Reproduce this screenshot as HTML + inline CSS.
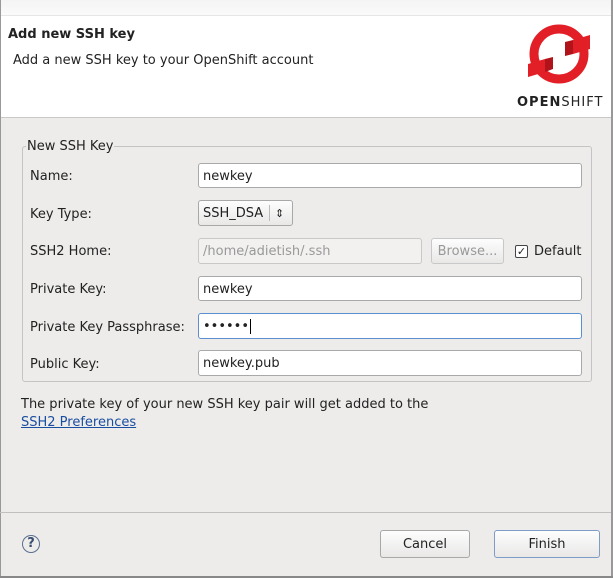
<!DOCTYPE html>
<html><head><style>
body{margin:0;width:613px;height:578px;background:#edeceb;font-family:"DejaVu Sans","Liberation Sans",sans-serif;font-size:13px;color:#222;position:relative;overflow:hidden}
.a{position:absolute}
.in{position:absolute;background:#fff;border:1px solid #a9a9a9;border-radius:3px;box-sizing:border-box;padding:1px 4px 0;line-height:23px}
.btn{position:absolute;box-sizing:border-box;border:1px solid #a8a8a8;border-radius:3px;background:linear-gradient(#fdfdfd,#e9e8e7);text-align:center}
.lbl{position:absolute;left:30px}
</style></head><body>
<div class="a" style="left:0;top:0;width:611px;height:117px;background:#fff;border-bottom:1px solid #c8c8c8"></div>
<div class="a" style="left:0;top:0;width:613px;height:15px;background:linear-gradient(#f4f4f4,#fafafa);border-bottom:1px solid #e6e6e6"></div>
<div class="a" style="left:0;top:0;width:1px;height:578px;background:#999"></div>
<div class="a" style="left:611px;top:0;width:2px;height:578px;background:#999"></div>
<div class="a" style="left:0;top:576px;width:613px;height:2px;background:#888"></div>
<div class="a" style="left:8px;top:27px;font-weight:bold">Add new SSH key</div>
<div class="a" style="left:13px;top:53px">Add a new SSH key to your OpenShift account</div>
<svg class="a" style="left:520px;top:22px" width="84" height="70" viewBox="0 0 84 70">
<circle cx="39" cy="32" r="25" fill="none" stroke="#e21f26" stroke-width="9"/>
<polygon points="8,42 25,37 25,50 8,55" fill="#e21f26"/>
<polygon points="53,18 70,13 70,27 53,32" fill="#e21f26"/>
<polygon points="25,37 33,35 33,47 25,50" fill="#b0131a"/>
<polygon points="45,20 53,18 53,32 45,34" fill="#b0131a"/>
</svg>
<div class="a" style="left:517px;top:95px;font-weight:bold;font-size:13px;letter-spacing:1px;color:#222">OPEN<span style="font-weight:normal">SHIFT</span></div>
<div class="a" style="left:22px;top:146px;width:570px;height:236px;border:1px solid #c4c4c4;border-radius:3px;box-sizing:border-box"></div>
<div class="a" style="left:26px;top:139px;background:#edeceb;padding:0 1px">New SSH Key</div>
<div class="lbl" style="top:169px">Name:</div>
<div class="in" style="left:198px;top:163px;width:384px;height:25px">newkey</div>
<div class="lbl" style="top:207px">Key Type:</div>
<div class="btn" style="left:198px;top:200px;width:95px;height:26px;text-align:left;padding-left:4px;line-height:25px">SSH_DSA <span style="position:absolute;left:70px;top:4px;height:16px;border-left:1px solid #bbb"></span><span style="position:absolute;left:76px;top:0;font-size:11px">&#8661;</span></div>
<div class="lbl" style="top:244px">SSH2 Home:</div>
<div class="in" style="left:198px;top:238px;width:224px;height:26px;background:#f2f1f0;border-color:#c8c8c8;color:#999">/home/adietish/.ssh</div>
<div class="btn" style="left:431px;top:238px;width:73px;height:26px;color:#999;border-color:#c8c8c8;line-height:25px">Browse...</div>
<div class="a" style="left:515px;top:245px;width:11px;height:11px;border:1px solid #444;border-radius:2px;background:#fff;font-size:11px;line-height:11px;text-align:center">&#10003;</div>
<div class="a" style="left:534px;top:244px">Default</div>
<div class="lbl" style="top:282px">Private Key:</div>
<div class="in" style="left:198px;top:276px;width:384px;height:25px">newkey</div>
<div class="lbl" style="top:320px">Private Key Passphrase:</div>
<div class="in" style="left:198px;top:313px;width:384px;height:26px;border-color:#5b8fd0;letter-spacing:0">&#8226;&#8226;&#8226;&#8226;&#8226;&#8226;<span style="border-left:1px solid #000;margin-left:1px"></span></div>
<div class="lbl" style="top:357px">Public Key:</div>
<div class="in" style="left:198px;top:350px;width:384px;height:26px">newkey.pub</div>
<div class="a" style="left:21px;top:397px">The private key of your new SSH key pair will get added to the</div>
<div class="a" style="left:21px;top:415px;color:#1a4ea0;text-decoration:underline">SSH2 Preferences</div>
<div class="a" style="left:0;top:512px;width:611px;height:1px;background:#c0c0c0"></div>
<div class="a" style="left:22px;top:535px;width:18px;height:18px;border:1px solid #5a6f8f;border-radius:50%;box-sizing:border-box;text-align:center;font-weight:bold;font-size:13px;line-height:16px;color:#3a4f70">?</div>
<div class="btn" style="left:380px;top:530px;width:90px;height:28px;line-height:27px">Cancel</div>
<div class="btn" style="left:494px;top:530px;width:106px;height:28px;line-height:27px;border-color:#7d9cc6">Finish</div>
</body></html>
